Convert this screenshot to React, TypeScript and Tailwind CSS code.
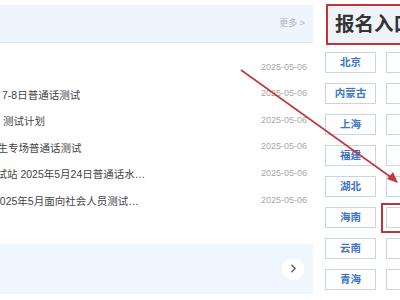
import { Fragment } from "react";
import { ChevronRight } from "lucide-react";

const news = [
  { title: "", offset: "ml-0", date: "2025-05-06" },
  { title: "7-8日普通话测试", offset: "ml-[2px]", date: "2025-05-06" },
  { title: "测试计划", offset: "ml-[3px]", date: "2025-05-06" },
  { title: "学生专场普通话测试", offset: "-ml-[13px]", date: "2025-05-06" },
  { title: "测试站 2025年5月24日普通话水…", offset: "-ml-[14px]", date: "2025-05-06" },
  { title: "2025年5月面向社会人员测试…", offset: "-ml-[6px]", date: "2025-05-06" },
];

const provinces = ["北京", "内蒙古", "上海", "福建", "湖北", "海南", "云南", "青海"];

export default function App() {
  return (
    <div
      className="relative w-[400px] h-[300px] overflow-hidden bg-white flex"
      style={{ fontFamily: '"Liberation Sans", "Noto Sans CJK SC", sans-serif' }}
    >
      {/* News column */}
      <div className="w-[313px] shrink-0 flex flex-col">
        <div className="mt-[5px] h-[38px] bg-[#eef5fc] border-b border-[#dce7f2] flex items-center justify-end pr-[8px]">
          <span className="text-[9px] text-[#aab2bc]">更多 &gt;</span>
        </div>
        <div className="pt-[11px] flex flex-col">
          {news.map((item, i) => (
            <div key={i} className="h-[26.6px] flex items-center justify-between pr-[6px]">
              <div className="overflow-hidden flex-1">
                <div className={`${item.offset} text-[10.5px] text-[#444] whitespace-nowrap pt-[3px]`}>
                  {item.title}
                </div>
              </div>
              <span className="text-[9px] text-[#a8a8a8]">{item.date}</span>
            </div>
          ))}
        </div>
        <div className="mt-[30px] h-[50px] bg-[#f0f6fd] flex items-center justify-end pr-[9px]">
          <div className="w-[22px] h-[22px] rounded-full bg-white flex items-center justify-center">
            <ChevronRight className="w-[13px] h-[13px] text-[#666]" strokeWidth={3} />
          </div>
        </div>
      </div>

      {/* Register column */}
      <div className="ml-[12px] shrink-0 w-[160px] flex flex-col">
        <div className="mt-[4px] ml-[1px] h-[41px] border-2 border-[#c2343a] bg-[#eef3fa] flex items-center pl-[7px]">
          <span className="text-[19.5px] font-bold text-[#333]">报名入口</span>
        </div>
        <div className="mt-[7px] grid grid-cols-[51px_51px] gap-x-[10px] gap-y-[10px]">
          {provinces.map((p) => (
            <Fragment key={p}>
              <div className="h-[21px] border border-[#c7d6e6] bg-white flex items-center justify-center text-[10.5px] font-bold text-[#3c74c6]">
                {p}
              </div>
              <div className="h-[21px] border border-[#c7d6e6] bg-white" />
            </Fragment>
          ))}
        </div>
      </div>

      {/* Annotation highlight */}
      <div className="absolute left-[381px] top-[203px] w-[40px] h-[30px] border-2 border-[#b8353a]" />

      {/* Annotation arrow */}
      <svg className="absolute left-0 top-0" width="400" height="300" viewBox="0 0 400 300">
        <line x1="241" y1="70" x2="392" y2="178" stroke="#c4383c" strokeWidth="1.6" />
        <polygon points="398,183 387,179 393,172" fill="#c4383c" />
      </svg>
    </div>
  );
}
